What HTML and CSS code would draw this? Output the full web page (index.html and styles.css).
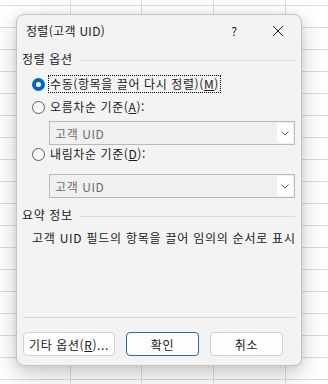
FILE: index.html
```html
<!DOCTYPE html>
<html lang="ko">
<head>
<meta charset="utf-8">
<link rel="stylesheet" href="styles.css">
</head>
<body>
<div class="sheet">
  <div class="dialog">
    <div class="titlebar">
      <span class="title">정렬(고객 UID)</span>
      <span class="help">?</span>
      <svg class="close" width="12" height="12" viewBox="0 0 12 12"><path d="M1 1L11 11M11 1L1 11" stroke="#1a1a1a" stroke-width="1"/></svg>
    </div>
    <div class="content">
      <div class="group-head"><span>정렬 옵션</span><i class="rule"></i></div>
      <div class="radio-row r1">
        <span class="radio checked"></span>
        <span class="label focus">수동(항목을 끌어 다시 정렬)(<u>M</u>)</span>
      </div>
      <div class="radio-row r2">
        <span class="radio"></span>
        <span class="label">오름차순 기준(<u>A</u>):</span>
      </div>
      <div class="select s1">
        <span class="sel-text">고객 UID</span>
        <span class="sel-btn"><svg width="8" height="5" viewBox="0 0 8 5"><path d="M0.5 0.5L4 4L7.5 0.5" fill="none" stroke="#606060" stroke-width="1"/></svg></span>
      </div>
      <div class="radio-row r3">
        <span class="radio"></span>
        <span class="label">내림차순 기준(<u>D</u>):</span>
      </div>
      <div class="select s2">
        <span class="sel-text">고객 UID</span>
        <span class="sel-btn"><svg width="8" height="5" viewBox="0 0 8 5"><path d="M0.5 0.5L4 4L7.5 0.5" fill="none" stroke="#606060" stroke-width="1"/></svg></span>
      </div>
      <div class="group-head g2"><span>요약 정보</span><i class="rule"></i></div>
      <div class="summary">고객 UID 필드의 항목을 끌어 임의의 순서로 표시</div>
      <div class="spacer"></div>
      <div class="bottom-rule"></div>
      <div class="buttons">
        <button class="btn b1">기타 옵션(<u>R</u>)...</button>
        <button class="btn b2 default">확인</button>
        <button class="btn b3">취소</button>
      </div>
    </div>
  </div>
</div>
</body>
</html>
```
FILE: styles.css
```css
* { box-sizing: border-box; }
html, body { margin: 0; padding: 0; }
body {
  width: 328px;
  height: 384px;
  overflow: hidden;
  font-family: "Noto Sans CJK KR", "Noto Sans", sans-serif;
  font-size: 12px;
  letter-spacing: 0.6px;
  color: #1a1a1a;
}
.sheet {
  width: 328px;
  height: 384px;
  padding: 14px 0 0 16px;
  background-color: #ffffff;
  background-image:
    linear-gradient(to right, transparent 70px, #dcdcdc 70px, #dcdcdc 71px, transparent 71px,
      transparent 141px, #dcdcdc 141px, #dcdcdc 142px, transparent 142px,
      transparent 213px, #dcdcdc 213px, #dcdcdc 214px, transparent 214px,
      transparent 285px, #dcdcdc 285px, #dcdcdc 286px, transparent 286px),
    repeating-linear-gradient(to bottom, transparent 0, transparent 5px, #dcdcdc 5px, #dcdcdc 6px, transparent 6px, transparent 22px);
}
.dialog {
  width: 286px;
  height: 352px;
  background: #f3f3f3;
  border: 1px solid #c4c4c4;
  border-radius: 8px;
  box-shadow: 0 8px 22px rgba(0,0,0,0.22), 0 0 6px rgba(0,0,0,0.08);
  display: flex;
  flex-direction: column;
}
.titlebar {
  height: 31px;
  display: flex;
  align-items: center;
  padding: 0 0 0 9px;
}
.title { font-size: 12px; line-height: 16px; flex: 1; letter-spacing: 0.3px; }
.help { width: 12px; margin-right: 32px; font-size: 12px; text-align: center; letter-spacing: 0; }
.close { margin-right: 17px; }
.content {
  flex: 1;
  display: flex;
  flex-direction: column;
  padding: 0 6px 9px 5px;
}
.group-head {
  display: flex;
  align-items: center;
  height: 16px;
  margin-top: 5px;
  line-height: 16px;
}
.group-head span { margin-right: 6px; }
.group-head .rule { flex: 1; height: 1px; background: #dadada; margin-top: 2px; }
.radio-row {
  display: flex;
  align-items: center;
  height: 18px;
  padding-left: 10px;
}
.r1 { margin-top: 8px; }
.r2 { margin-top: 5px; }
.r3 { margin-top: 0; }
.radio {
  width: 13px;
  height: 13px;
  border-radius: 50%;
  border: 1px solid #5a5a5a;
  background: #fafafa;
  margin-right: 3px;
  flex: none;
}
.radio.checked {
  border: 4px solid #0067c0;
  background: #ffffff;
}
.label { line-height: 16px; padding: 0 1px; border: 1px solid transparent; }
.label.focus { border: 1px dotted #000; }
.label u { text-decoration: underline; text-underline-offset: 1px; }
.select {
  margin-left: 27px;
  height: 24px;
  border: 1px solid #b9b9b9;
  background: #f0f0f0;
  display: flex;
  align-items: center;
  padding: 1px 1px 1px 5px;
}
.s1 { margin-top: 5px; }
.s2 { margin-top: 11px; }
.sel-text { flex: 1; color: #6e6e6e; }
.sel-btn {
  width: 16px;
  height: 100%;
  background: #ffffff;
  display: flex;
  align-items: center;
  justify-content: center;
}
.g2 { margin-top: 9px; }
.summary {
  margin-top: 7px;
  padding-left: 10px;
  line-height: 16px;
  white-space: nowrap;
  letter-spacing: 0.75px;
}
.spacer { flex: 1; }
.bottom-rule { height: 1px; background: #d6d6d6; margin: 0 0 14px 1px; }
.buttons { display: flex; padding-left: 1px; }
.btn {
  font-family: inherit;
  font-size: 12px;
  letter-spacing: 0.6px;
  color: #1a1a1a;
  height: 24px;
  border: 1px solid #d0d0d0;
  border-radius: 4px;
  background: #fdfdfd;
  padding: 0;
}
.b1 { width: 92px; }
.b2 { width: 73px; margin-left: 11px; border-color: #2a6aa8; }
.b3 { width: 73px; margin-left: 11px; }
```
